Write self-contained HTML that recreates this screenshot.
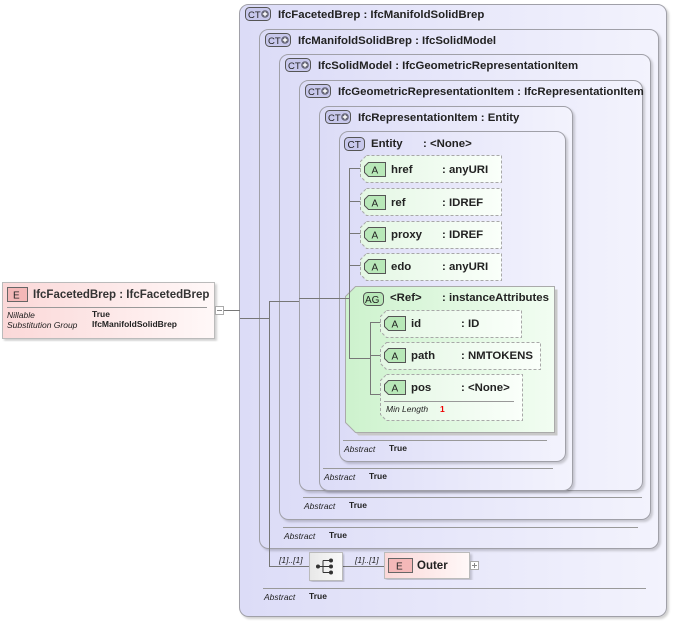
<!DOCTYPE html>
<html><head><meta charset="utf-8"><style>
html,body{margin:0;padding:0;background:#fff;}
svg{display:block;font-family:"Liberation Sans",Arial,sans-serif;}
.t{font-size:11.4px;font-weight:bold;fill:#222;}
.s{font-size:8.5px;font-style:italic;fill:#222;}
.sb{font-size:8.5px;font-weight:bold;fill:#222;}
.box{stroke:#a0a0a8;stroke-width:1;fill:url(#gb);}
.ln{stroke:#777;stroke-width:1;fill:none;}
.sep{stroke:#999;stroke-width:1;}
.att{fill:url(#gg);stroke:#a8a8a8;stroke-dasharray:3,2;}
</style></head><body>
<svg width="679" height="621" viewBox="0 0 679 621">
<defs>
<linearGradient id="gb" x1="0" x2="1" y1="0" y2="0"><stop offset="0" stop-color="#dcdcf7"/><stop offset="1" stop-color="#f3f3fd"/></linearGradient>
<linearGradient id="gg" x1="0" x2="1"><stop offset="0" stop-color="#e4f7e4"/><stop offset="1" stop-color="#fafffa"/></linearGradient>
<linearGradient id="gag" x1="0" x2="1"><stop offset="0" stop-color="#cdf2cd"/><stop offset="1" stop-color="#f2fdf2"/></linearGradient>
<linearGradient id="ge" x1="0" x2="1"><stop offset="0" stop-color="#fbd8d8"/><stop offset="1" stop-color="#fff8f8"/></linearGradient>
<linearGradient id="gs" x1="0" x2="1"><stop offset="0" stop-color="#e8e8e8"/><stop offset="1" stop-color="#fafafa"/></linearGradient>
<filter id="sh" x="-5%" y="-5%" width="110%" height="110%"><feDropShadow dx="2" dy="2" stdDeviation="1" flood-color="#000" flood-opacity="0.18"/></filter>
<g id="ct"><rect x="0" y="0" width="25" height="13" rx="4" fill="#c8c8ec" stroke="#555"/><text x="2.5" y="10.5" style="font-size:9.5px;fill:#222">CT</text><circle cx="19.5" cy="6.5" r="3.8" fill="#667"/><path d="M17.3 6.5h4.4M19.5 4.3v4.4" stroke="#fff" stroke-width="1.4"/></g>
<g id="ctp"><rect x="0" y="0" width="20" height="13" rx="4" fill="#c8c8ec" stroke="#555"/><text x="3" y="10.5" style="font-size:10px;fill:#222">CT</text></g>
<g id="ab"><path d="M4 0H21V14H4L0 10V4Z" fill="#b8e8b8" stroke="#555"/><text x="7" y="11" style="font-size:10px;fill:#222">A</text></g>
</defs>

<rect class="box" filter="url(#sh)" x="239.5" y="4.5" width="427" height="612" rx="9"/>
<rect class="box" filter="url(#sh)" x="259.5" y="29.5" width="399" height="519" rx="9"/>
<rect class="box" filter="url(#sh)" x="279.5" y="54.5" width="371" height="465" rx="9"/>
<rect class="box" filter="url(#sh)" x="299.5" y="80.5" width="343" height="410" rx="9"/>
<rect class="box" filter="url(#sh)" x="319.5" y="106.5" width="253" height="384" rx="9"/>
<rect class="box" filter="url(#sh)" x="339.5" y="131.5" width="226" height="330" rx="9"/>

<use href="#ct" x="245.5" y="7.5"/><text class="t" x="278" y="18">IfcFacetedBrep : IfcManifoldSolidBrep</text>
<use href="#ct" x="265.5" y="33.5"/><text class="t" x="298" y="44">IfcManifoldSolidBrep : IfcSolidModel</text>
<use href="#ct" x="285.5" y="58.5"/><text class="t" x="318" y="69">IfcSolidModel : IfcGeometricRepresentationItem</text>
<use href="#ct" x="305.5" y="84.5"/><text class="t" x="338" y="95">IfcGeometricRepresentationItem : IfcRepresentationItem</text>
<use href="#ct" x="325.5" y="110.5"/><text class="t" x="358" y="121">IfcRepresentationItem : Entity</text>
<use href="#ctp" x="344.5" y="137.5"/><text class="t" x="371" y="147">Entity</text><text class="t" x="423" y="147">: &lt;None&gt;</text>

<!-- attribute group (drawn before lines) -->
<path d="M355.5 286.5H554.5V432.5H355.5L345.5 422.5V296.5Z" fill="#c8c8c8" transform="translate(3,3)"/>
<path d="M355.5 286.5H554.5V432.5H355.5L345.5 422.5V296.5Z" fill="url(#gag)" stroke="#aaa"/>

<path class="ln" d="M220 310.5H240M240 318.5H269.5M269.5 301V566.5H309M269 301.5H299M299 298.5H349.5M349.5 168V358.5M349 168.5H361M349 201.5H361M349 233.5H361M349 265.5H361M349 358.5H370.5M370.5 322V354.5M370 322.5H381M370 355.5H381M370.5 355V354.5M342 566.5H385"/>
<path class="ln" d="M370.5 322V394.5M370 394.5H381"/>

<g>
<path class="att" d="M366.5 155.5H501.5V182.5H366.5L360.5 176.5V161.5Z"/><use href="#ab" x="364.5" y="162.5"/><text class="t" x="391" y="173">href</text><text class="t" x="442" y="173">: anyURI</text>
<path class="att" d="M366.5 188.5H501.5V215.5H366.5L360.5 209.5V194.5Z"/><use href="#ab" x="364.5" y="195.5"/><text class="t" x="391" y="206">ref</text><text class="t" x="442" y="206">: IDREF</text>
<path class="att" d="M366.5 221.5H501.5V248.5H366.5L360.5 242.5V227.5Z"/><use href="#ab" x="364.5" y="227.5"/><text class="t" x="391" y="238">proxy</text><text class="t" x="442" y="238">: IDREF</text>
<path class="att" d="M366.5 253.5H501.5V280.5H366.5L360.5 274.5V259.5Z"/><use href="#ab" x="364.5" y="259.5"/><text class="t" x="391" y="270">edo</text><text class="t" x="442" y="270">: anyURI</text>
</g>

<rect x="363.5" y="292.5" width="20" height="13" rx="4" fill="#b8e8b8" stroke="#555"/><text x="365" y="303" style="font-size:10px;fill:#222">AG</text>
<text class="t" x="390" y="301">&lt;Ref&gt;</text><text class="t" x="442" y="301">: instanceAttributes</text>
<path class="att" d="M386.5 310.5H521.5V337.5H386.5L380.5 331.5V316.5Z"/><use href="#ab" x="384.5" y="316.5"/><text class="t" x="411" y="327">id</text><text class="t" x="461" y="327">: ID</text>
<path class="att" d="M386.5 342.5H540.5V369.5H386.5L380.5 363.5V348.5Z"/><use href="#ab" x="384.5" y="348.5"/><text class="t" x="411" y="359">path</text><text class="t" x="461" y="359">: NMTOKENS</text>
<path class="att" d="M386.5 374.5H522.5V420.5H386.5L380.5 414.5V380.5Z"/><use href="#ab" x="384.5" y="380.5"/><text class="t" x="411" y="391">pos</text><text class="t" x="461" y="391">: &lt;None&gt;</text>
<line class="sep" x1="384" y1="401.5" x2="514" y2="401.5"/>
<text class="s" x="386" y="412">Min Length</text><text x="440" y="412" style="font-size:8.5px;font-weight:bold;fill:#e00">1</text>

<line class="sep" x1="343" y1="440.5" x2="547" y2="440.5"/><text class="s" x="344" y="452">Abstract</text><text class="sb" x="389" y="451">True</text>
<line class="sep" x1="323" y1="468.5" x2="553" y2="468.5"/><text class="s" x="324" y="480">Abstract</text><text class="sb" x="369" y="479">True</text>
<line class="sep" x1="303" y1="497.5" x2="642" y2="497.5"/><text class="s" x="304" y="509">Abstract</text><text class="sb" x="349" y="508">True</text>
<line class="sep" x1="283" y1="527.5" x2="638" y2="527.5"/><text class="s" x="284" y="539">Abstract</text><text class="sb" x="329" y="538">True</text>
<line class="sep" x1="263" y1="588.5" x2="646" y2="588.5"/><text class="s" x="264" y="600">Abstract</text><text class="sb" x="309" y="599">True</text>

<text class="s" x="279" y="563">[1]..[1]</text>
<rect x="309.5" y="552.5" width="33" height="28" fill="url(#gs)" stroke="#bbb" filter="url(#sh)"/>
<path d="M316 566.5H323M323 560.5V572.5M323 560.5H330M323 566.5H330M323 572.5H330" stroke="#333" fill="none"/>
<circle cx="318" cy="566.5" r="2" fill="#333"/><circle cx="331" cy="560.5" r="2" fill="#333"/><circle cx="331" cy="566.5" r="2" fill="#333"/><circle cx="331" cy="572.5" r="2" fill="#333"/>
<text class="s" x="355" y="563">[1]..[1]</text>
<rect x="384.5" y="552.5" width="85" height="26" fill="url(#ge)" stroke="#bbb" filter="url(#sh)"/>
<rect x="388.5" y="558.5" width="24" height="14" fill="#f4b8b8" stroke="#666"/><text x="396" y="569.5" style="font-size:10px;fill:#222">E</text>
<text x="417" y="569" style="font-size:11.5px;font-weight:bold;fill:#222">Outer</text>
<rect x="470.5" y="561.5" width="8" height="8" fill="#fff" stroke="#aaa"/><path d="M472 565.5h5M474.5 563v5" stroke="#888"/>

<rect x="2.5" y="282.5" width="212" height="56" fill="url(#ge)" stroke="#bbb" filter="url(#sh)"/>
<rect x="7.5" y="287.5" width="20" height="14" fill="#f4b8b8" stroke="#666"/><text x="13" y="298.5" style="font-size:10px;fill:#222">E</text>
<text x="33" y="298" style="font-size:11.5px;font-weight:bold;fill:#333">IfcFacetedBrep : IfcFacetedBrep</text>
<line class="sep" x1="7" y1="307.5" x2="207" y2="307.5"/>
<text class="s" x="7" y="318">Nillable</text><text class="sb" x="92" y="317">True</text>
<text class="s" x="7" y="328">Substitution Group</text><text class="sb" x="92" y="327">IfcManifoldSolidBrep</text>
<rect x="215.5" y="306.5" width="8" height="8" fill="#fff" stroke="#aaa"/><path d="M217 310.5h5" stroke="#888"/>
</svg>
</body></html>
